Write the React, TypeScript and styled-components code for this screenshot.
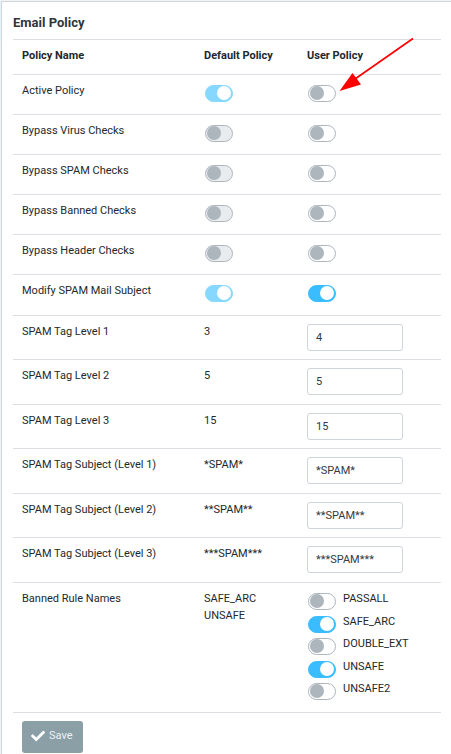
import React, { useState } from 'react';
import styled, { createGlobalStyle } from 'styled-components';
import { FaCheck } from 'react-icons/fa';

const GlobalStyle = createGlobalStyle`
  *, *::before, *::after { box-sizing: border-box; }
  body {
    margin: 0;
    background: #f1f3f4;
    color: #23282c;
    font-family: Roboto, "Liberation Sans", sans-serif;
    font-size: 11px;
    line-height: 17px;
  }
`;

const Page = styled.main`
  display: grid;
  grid-template-columns: 1px 1fr;
  min-height: 100vh;
  padding-top: 1px;
`;

const SideEdge = styled.div`
  background: linear-gradient(#e3f3fb 40px, #f1f3f4 40px);
`;

const Panel = styled.section`
  position: relative;
  min-width: 0;
  padding: 12px 10px 0 11px;
  border: 1px solid #d3d6d8;
  border-width: 1px 0 0 1px;
  background: #fff;
`;

const Title = styled.h1`
  margin: 0;
  padding-bottom: 7px;
  font-size: 13px;
  font-weight: 700;
  line-height: 18px;
  color: #2f353a;
`;

const PolicyTable = styled.table`
  width: 100%;
  table-layout: fixed;
  border-spacing: 0;
  border-bottom: 1px solid #dcdfe3;
`;

const Column = styled.col<{ $width?: number }>`
  width: ${({ $width }) => ($width ? `${$width}px` : 'auto')};
`;

const HeadCell = styled.th`
  height: 35px;
  padding: 7px 9px;
  border-top: 1px solid #dcdfe3;
  text-align: left;
  vertical-align: top;
  font-weight: 700;
`;

const Cell = styled.td`
  padding: 7px 9px;
  border-top: 1px solid #dcdfe3;
  vertical-align: top;
  white-space: nowrap;
`;

const ToggleRow = styled.tr`
  height: 40px;
  &:nth-child(6) { height: 41px; }
`;

const FieldRow = styled.tr`
  height: 44px;
  &:nth-child(even) { height: 45px; }
`;

const RulesRow = styled.tr`
  height: 130px;
`;

const Switch = styled.input`
  appearance: none;
  flex: none;
  display: block;
  width: 28px;
  height: 17px;
  margin: 3px 0 0 1px;
  border: 1px solid #adb5bd;
  border-radius: 9px;
  background: #fff;
  &::before {
    content: '';
    display: block;
    width: 14px;
    height: 14px;
    margin-left: 1px;
    border-radius: 50%;
    background: #adb5bd;
  }
  &:checked { border-color: #39bdff; background: #39bdff; }
  &:checked::before { margin-left: 11px; background: #fff; }
  &:disabled { background: #e9ecef; }
  &:checked:disabled { border-color: #86d8ff; background: #86d8ff; }
`;

const TextField = styled.input`
  display: block;
  width: 96px;
  height: 27px;
  margin-top: 1px;
  padding: 0 8px;
  border: 1px solid #ced4da;
  border-radius: 3px;
  background: #fff;
  color: #343a40;
  font: inherit;
`;

const RuleList = styled.div`
  display: grid;
  grid-template-rows: 23px 22px 23px 22px 22px;
`;

const Rule = styled.label`
  display: flex;
  align-items: flex-start;
  gap: 7px;
`;

const Actions = styled.div`
  padding: 8px 9px 0;
`;

const SaveButton = styled.button`
  display: flex;
  align-items: center;
  gap: 4px;
  height: 32px;
  padding: 0 10px 3px 9px;
  border: 0;
  border-radius: 3px;
  background: #8b9fa6;
  color: #eef1f2;
  font: inherit;
`;

const CheckMark = styled(FaCheck)`
  width: 14px;
  height: 14px;
  color: #fff;
`;

const Arrow = styled.svg`
  position: absolute;
  left: 336px;
  top: 34px;
  pointer-events: none;
`;

const toggles = [
  { name: 'Active Policy', preset: true, user: false },
  { name: 'Bypass Virus Checks', preset: false, user: false },
  { name: 'Bypass SPAM Checks', preset: false, user: false },
  { name: 'Bypass Banned Checks', preset: false, user: false },
  { name: 'Bypass Header Checks', preset: false, user: false },
  { name: 'Modify SPAM Mail Subject', preset: true, user: true },
];

const fields = [
  { name: 'SPAM Tag Level 1', preset: '3', user: '4' },
  { name: 'SPAM Tag Level 2', preset: '5', user: '5' },
  { name: 'SPAM Tag Level 3', preset: '15', user: '15' },
  { name: 'SPAM Tag Subject (Level 1)', preset: '*SPAM*', user: '*SPAM*' },
  { name: 'SPAM Tag Subject (Level 2)', preset: '**SPAM**', user: '**SPAM**' },
  { name: 'SPAM Tag Subject (Level 3)', preset: '***SPAM***', user: '***SPAM***' },
];

const rules = [
  { name: 'PASSALL', on: false },
  { name: 'SAFE_ARC', on: true },
  { name: 'DOUBLE_EXT', on: false },
  { name: 'UNSAFE', on: true },
  { name: 'UNSAFE2', on: false },
];

function Toggle({ initial, label, disabled }: { initial: boolean; label?: string; disabled?: boolean }) {
  const [on, setOn] = useState(initial);
  return (
    <Switch
      type="checkbox"
      role="switch"
      aria-label={label}
      checked={on}
      disabled={disabled}
      onChange={(e) => setOn(e.target.checked)}
    />
  );
}

export default function App() {
  return (
    <>
      <GlobalStyle />
      <Page>
        <SideEdge />
        <Panel>
          <Title>Email Policy</Title>
          <PolicyTable>
            <colgroup>
              <Column $width={182} />
              <Column $width={103} />
              <Column />
            </colgroup>
            <thead>
              <tr>
                <HeadCell scope="col">Policy Name</HeadCell>
                <HeadCell scope="col">Default Policy</HeadCell>
                <HeadCell scope="col">User Policy</HeadCell>
              </tr>
            </thead>
            <tbody>
              {toggles.map((t) => (
                <ToggleRow key={t.name}>
                  <Cell>{t.name}</Cell>
                  <Cell><Toggle initial={t.preset} label={`${t.name}, default policy`} disabled /></Cell>
                  <Cell><Toggle initial={t.user} label={`${t.name}, user policy`} /></Cell>
                </ToggleRow>
              ))}
              {fields.map((f, i) => (
                <FieldRow key={f.name}>
                  <Cell><label htmlFor={`field-${i}`}>{f.name}</label></Cell>
                  <Cell>{f.preset}</Cell>
                  <Cell><TextField id={`field-${i}`} type="text" defaultValue={f.user} /></Cell>
                </FieldRow>
              ))}
              <RulesRow>
                <Cell>Banned Rule Names</Cell>
                <Cell>SAFE_ARC<br />UNSAFE</Cell>
                <Cell>
                  <RuleList>
                    {rules.map((r) => (
                      <Rule key={r.name}>
                        <Toggle initial={r.on} />
                        {r.name}
                      </Rule>
                    ))}
                  </RuleList>
                </Cell>
              </RulesRow>
            </tbody>
          </PolicyTable>
          <Actions>
            <SaveButton type="button"><CheckMark aria-hidden="true" />Save</SaveButton>
          </Actions>
          <Arrow width="78" height="58" viewBox="0 0 78 58" aria-hidden="true">
            <path d="M75 2.5 17 43" stroke="#f00" strokeWidth="1.7" fill="none" />
            <path d="M1.5 55 14.5 37 23 48.500Z" fill="#f00" />
          </Arrow>
        </Panel>
      </Page>
    </>
  );
}
